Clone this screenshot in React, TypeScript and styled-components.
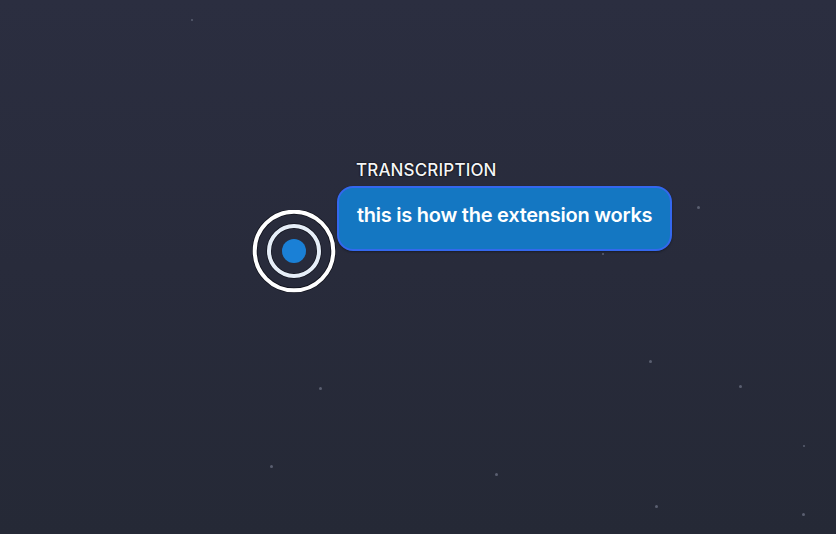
import React from 'react'
import styled, { createGlobalStyle } from 'styled-components'

const GlobalStyle = createGlobalStyle`
  html, body {
    margin: 0;
    padding: 0;
    background: #292c3d;
  }
  body {
    font-family: Inter, "Noto Sans", "Liberation Sans", sans-serif;
  }
`

const Page = styled.div`
  position: relative;
  width: 836px;
  height: 534px;
  overflow: hidden;
  background: linear-gradient(180deg, #2b2e40 0%, #282b3b 50%, #252936 100%);
`

const Star = styled.span<{ $size?: number }>`
  position: absolute;
  width: ${(p) => p.$size ?? 3}px;
  height: ${(p) => p.$size ?? 3}px;
  border-radius: 50%;
  background: #5a5f70;
`

const Stage = styled.div`
  display: flex;
  align-items: flex-start;
  padding: 160px 0 0 252px;
`

const TargetIcon = styled.svg`
  flex: none;
  width: 84px;
  height: 84px;
  margin-top: 50px;
`

const Callout = styled.div`
  display: flex;
  flex-direction: column;
  margin-left: 1px;
`

const Label = styled.div`
  padding-left: 19px;
  font-size: 17px;
  line-height: 20px;
  font-weight: 500;
  letter-spacing: 0.15px;
  color: #f4f5f7;
  text-shadow: 0 0 2px rgba(0, 0, 0, 0.9), 0 0 1px rgba(0, 0, 0, 0.9);
`

const Bubble = styled.div`
  margin-top: 6px;
  height: 65px;
  box-sizing: border-box;
  padding: 14px 18px 0 18px;
  background: #1477c2;
  border: 2px solid #3468ee;
  border-radius: 16px;
  box-shadow: 0 1px 2px rgba(10, 12, 20, 0.5);
  color: #ffffff;
  font-size: 20px;
  line-height: 26px;
  font-weight: 600;
  letter-spacing: -0.25px;
  white-space: nowrap;
`

const stars: [number, number, number?][] = [
  [191, 19, 2],
  [697, 206],
  [602, 253, 2],
  [649, 360],
  [739, 385],
  [319, 387],
  [270, 465],
  [495, 473],
  [655, 505],
  [803, 445, 2],
  [802, 513],
]

const Target = () => (
  <TargetIcon viewBox="0 0 84 84">
    <circle cx="42" cy="41" r="39.3" fill="none" stroke="rgba(12,14,22,0.8)" strokeWidth="5.6" />
    <circle cx="42" cy="41" r="39.3" fill="none" stroke="#ffffff" strokeWidth="4" />
    <circle cx="42" cy="41" r="25" fill="none" stroke="rgba(12,14,22,0.8)" strokeWidth="5.4" />
    <circle cx="42" cy="41" r="25" fill="none" stroke="#e6eef8" strokeWidth="4" />
    <circle cx="42" cy="41" r="12" fill="#1a80d6" />
  </TargetIcon>
)

export default function App() {
  return (
    <>
      <GlobalStyle />
      <Page>
        {stars.map(([x, y, s], i) => (
          <Star key={i} $size={s} style={{ left: x, top: y }} />
        ))}
        <Stage>
          <Target />
          <Callout>
            <Label>TRANSCRIPTION</Label>
            <Bubble>this is how the extension works</Bubble>
          </Callout>
        </Stage>
      </Page>
    </>
  )
}
